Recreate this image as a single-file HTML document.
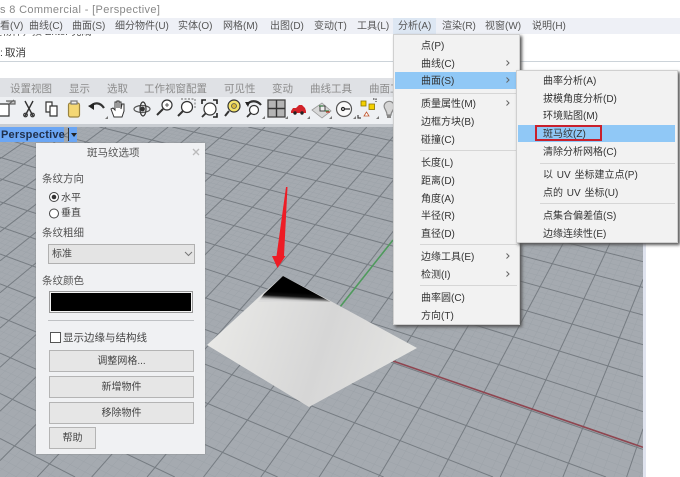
<!DOCTYPE html>
<html><head><meta charset="utf-8"><style>
*{box-sizing:border-box}
html,body{margin:0;padding:0;width:680px;height:477px;overflow:hidden}
body{position:relative;background:#fff;font:10px/14px "Liberation Sans","Noto Sans CJK SC",sans-serif;color:#333}
#root{position:absolute;left:0;top:0;width:680px;height:477px;overflow:hidden;filter:blur(.3px)}
.a,.t{position:absolute;white-space:nowrap}
.t{line-height:14px;height:14px;margin-top:2px}
.d{margin-top:1px}
.b{position:absolute}
.g{color:#8c8c8c;font-size:10.5px;margin-top:1px}
.btn{position:absolute;left:49px;width:145px;height:22px;background:#e6e6e6;border:1px solid #b4b4b4;text-align:center;line-height:22px;color:#444}
</style></head><body><div id="root">
<svg class="a" style="left:0;top:127px" width="643" height="350" viewBox="0 127 643 350" id="vp">
<rect x="0" y="127" width="643" height="350" fill="#a5aab0"/>
<g id="grid"></g>
<line x1="393" y1="361" x2="643" y2="447.300" stroke="#8f4650" stroke-width="1.600"/>
<line x1="340" y1="307" x2="393" y2="240" stroke="#4f9a5c" stroke-width="1.600"/>
<defs><linearGradient id="pl" gradientUnits="userSpaceOnUse" x1="293" y1="292.500" x2="292.500" y2="302"><stop offset="0" stop-color="#000"/><stop offset=".4" stop-color="#111"/><stop offset=".8" stop-color="#c8c8c8"/><stop offset="1" stop-color="#dcdcdc"/></linearGradient>
<linearGradient id="pl2" gradientUnits="userSpaceOnUse" x1="215" y1="330" x2="400" y2="390"><stop offset="0" stop-color="#e8e8e6"/><stop offset=".55" stop-color="#d6d6d6"/><stop offset="1" stop-color="#e4e4e2"/></linearGradient></defs>
<polygon points="283,276 325,298 417,348 309,407 207,345 260,296" fill="url(#pl2)"/>
<polygon points="283,276 331,302 258,302 264,294" fill="url(#pl)"/>
<polygon points="286,187 287.500,187 284,256 285.500,256 277.500,268 272,256 276.500,256" fill="#ee1c25"/>
</svg>
<script>
(function(){var O=[483,394],A=[-1261,-210],B=[960,-503],a=.027,b=.034;
var X0=0,X1=643,Y0=127,Y1=477;
function P(i,j){var d=1+i*a+j*b;return [(O[0]+i*a*A[0]+j*b*B[0])/d,(O[1]+i*a*A[1]+j*b*B[1])/d]}
var s='',I0=-11,I1=30,J0=-9,J1=30;
function L(p,q,c,w){var t0=0,t1=1,dx=q[0]-p[0],dy=q[1]-p[1];
var ps=[-dx,dx,-dy,dy],qs=[p[0]-X0,X1-p[0],p[1]-Y0,Y1-p[1]];
for(var n=0;n<4;n++){if(ps[n]==0){if(qs[n]<0)return}else{var r=qs[n]/ps[n];if(ps[n]<0){if(r>t1)return;if(r>t0)t0=r}else{if(r<t0)return;if(r<t1)t1=r}}}
s+='<line x1="'+(p[0]+t0*dx).toFixed(1)+'" y1="'+(p[1]+t0*dy).toFixed(1)+'" x2="'+(p[0]+t1*dx).toFixed(1)+'" y2="'+(p[1]+t1*dy).toFixed(1)+'" stroke="'+c+'" stroke-width="'+w+'"/>'}
for(var k=0;k<2;k++){for(var n=I0*5;n<=I1*5;n++){var v=n/5,m=n%5==0;if(m!=(k==1))continue;
L(P(v,J0),P(v,J1),m?'#767c82':'#9ca2a8',m?1:.5)}
for(n=J0*5;n<=J1*5;n++){v=n/5;m=n%5==0;if(m!=(k==1))continue;
L(P(I0,v),P(I1,v),m?'#767c82':'#9ca2a8',m?1:.5)}}
document.getElementById('grid').innerHTML=s})();
</script>
<div class="b" style="left:643px;top:127px;width:3px;height:350px;background:#dfe3ee"></div>

<div class="b" style="left:0;top:0;width:680px;height:18px;background:#fff"></div>
<span class="t d" style="left:0;top:2px;color:#888;font-size:11px;letter-spacing:.35px">s 8 Commercial - [Perspective]</span>

<div class="b" style="left:0;top:34px;width:680px;height:44px;background:#fff;overflow:hidden">
<span class="t" style="left:-8px;top:-10px;color:#444">选物件，按 Enter 完成</span>
<span class="t d" style="left:0;top:11px;color:#333;font-size:10.5px">:</span>
<span class="t d" style="left:5px;top:11px;color:#333;font-size:10.5px">取消</span>
<div class="b" style="left:0;top:27px;width:680px;height:1px;background:#ccd3d9"></div>
</div>
<div class="b" style="left:0;top:18px;width:680px;height:16px;background:#eef0f6"></div>
<div class="b" style="left:393px;top:18px;width:43px;height:16px;background:#dde7f3"></div>
<span class="t" style="left:0;top:17.500px;color:#555">看(V)</span>
<span class="t" style="left:29px;top:17.500px;color:#555">曲线(C)</span>
<span class="t" style="left:72px;top:17.500px;color:#555">曲面(S)</span>
<span class="t" style="left:115px;top:17.500px;color:#555">细分物件(U)</span>
<span class="t" style="left:178px;top:17.500px;color:#555">实体(O)</span>
<span class="t" style="left:223px;top:17.500px;color:#555">网格(M)</span>
<span class="t" style="left:270px;top:17.500px;color:#555">出图(D)</span>
<span class="t" style="left:314px;top:17.500px;color:#555">变动(T)</span>
<span class="t" style="left:357px;top:17.500px;color:#555">工具(L)</span>
<span class="t" style="left:398px;top:17.500px;color:#555">分析(A)</span>
<span class="t" style="left:442px;top:17.500px;color:#555">渲染(R)</span>
<span class="t" style="left:485px;top:17.500px;color:#555">视窗(W)</span>
<span class="t" style="left:532px;top:17.500px;color:#555">说明(H)</span>

<div class="b" style="left:0;top:78px;width:643px;height:19px;background:#dfe1e5"></div>
<div class="b" style="left:643px;top:78px;width:37px;height:49px;background:#fff"></div>
<span class="t g" style="left:10px;top:81px">设置视图</span>
<span class="t g" style="left:69px;top:81px">显示</span>
<span class="t g" style="left:107px;top:81px">选取</span>
<span class="t g" style="left:144px;top:81px">工作视窗配置</span>
<span class="t g" style="left:224px;top:81px">可见性</span>
<span class="t g" style="left:272px;top:81px">变动</span>
<span class="t g" style="left:310px;top:81px">曲线工具</span>
<span class="t g" style="left:369px;top:81px">曲面工具</span>
<div class="b" style="left:0;top:97px;width:643px;height:27px;background:#eef0f3"></div>
<div class="b" style="left:0;top:124px;width:643px;height:3px;background:#c9cdd2"></div>

<svg class="a" style="left:0;top:97px" width="400" height="27" viewBox="0 97 400 27" fill="none" stroke="#333" stroke-width="1.200">
<path d="M-2 104H9V116H-2" fill="#fff"/><path d="M9 104L14 100M6 101H15V104H9" fill="#ccc" stroke="#666"/>
<path d="M25 101L33 116M33 101L25 116" stroke="#333" stroke-width="1.400"/><circle cx="25.500" cy="115" r="1.800"/><circle cx="32.500" cy="115" r="1.800"/>
<path d="M46 102H52V112H46Z" fill="#fff"/><path d="M50 106H57V116H50Z" fill="#fff"/>
<rect x="68.500" y="103" width="11" height="14" rx="2" fill="#f4d774" stroke="#9a8440"/><rect x="71" y="101" width="6" height="3" fill="#eee" stroke="#777"/>
<path d="M90 107C94 102 100 102 104 108" stroke-width="2.200"/><path d="M88 106L94 103L94 110Z" fill="#222" stroke="none"/>
<path d="M114 117L111 109L113 108L115 110V102H117V108V101H119V108V102H121V109L122 104H124V111L122 117Z" fill="#fff" stroke-width="1"/>
<ellipse cx="142" cy="109" rx="8" ry="3.500" stroke="#555"/><ellipse cx="143" cy="109" rx="3" ry="7" stroke="#333"/><circle cx="142.500" cy="109" r="1.800" fill="#333"/>
<circle cx="167" cy="105" r="5" fill="#fff"/><path d="M163 109L157 115" stroke-width="2"/><path d="M165 105h4M167 103v4" stroke-width=".8"/>
<circle cx="187" cy="107" r="5.500" fill="#fff"/><path d="M183 111L178 116" stroke-width="2"/><path d="M181 99H195V109" stroke="#666" stroke-dasharray="2 1.500" stroke-width=".9"/>
<circle cx="210" cy="109" r="6" fill="#fff"/><path d="M206 113L202 117" stroke-width="1.800"/><path d="M202 104V100H206M213 100H217V104M217 113V117H213" stroke="#222" stroke-width="1.600"/>
<circle cx="234" cy="106" r="6" fill="#f3e26b"/><path d="M229 111L225 116" stroke-width="2"/><circle cx="234" cy="106" r="2.500" fill="#d9b93a" stroke="#555" stroke-width=".8"/>
<circle cx="254" cy="110" r="4.500" fill="#fff"/><path d="M251 113L247 117" stroke-width="1.800"/><path d="M247 105C250 100 257 100 261 105" stroke-width="2.200"/><path d="M245 102l5 0l-2 5z" fill="#222" stroke="none"/>
<rect x="268" y="100" width="17" height="17" fill="#b4b4b4" stroke="#444" stroke-width="1.300"/><path d="M276.500 100V117M268 108.500H285" stroke="#333" stroke-width="1.400"/>
<path d="M291 111L293 108L296 108L299 105H302L305 108L306 111V113H291Z" fill="#d2232a" stroke="none"/><circle cx="295" cy="113" r="1.700" fill="#222" stroke="none"/><circle cx="302" cy="113" r="1.700" fill="#222" stroke="none"/>
<path d="M312 110L322 103L331 111L322 118Z" fill="#d8d8d8" stroke="#999" stroke-width=".8"/><rect x="320" y="106" width="5" height="5" fill="#eee" stroke="#333" stroke-width=".9"/><path d="M319 106h4M325 111h4" stroke="#3a7d44"/><path d="M326 112h4" stroke="#c0392b"/>
<circle cx="344" cy="109" r="7.500" fill="#fafafa" stroke="#555"/><circle cx="343" cy="109" r="1.500" fill="#fff" stroke="#222"/><path d="M344 109h6" stroke="#222"/>
<rect x="361" y="101" width="5" height="5" fill="#f4d000" stroke="#8a7400" stroke-width=".8"/><rect x="369" y="104" width="5.500" height="5.500" fill="#f4d000" stroke="#8a7400" stroke-width=".8"/><path d="M364 116L366.500 112L369 116Z" fill="#fff" stroke="#c0552d" stroke-width=".8"/><path d="M373 99H376V102" stroke="#444" stroke-dasharray="1.500 1"/><path d="M358 115V118H361" stroke="#444"/>
<path d="M385 109C381 102 392 98 394 105C395 110 391 111 391 115H387C387 112 386 111 385 109Z" fill="#d5d5d5" stroke="#888"/><rect x="387" y="115" width="4" height="3" fill="#888" stroke="none"/>
<g fill="#777" stroke="none"><path d="M105 119h3v-3z"/><path d="M262 119h3v-3z"/><path d="M285 119h3v-3z"/><path d="M307 119h3v-3z"/><path d="M329 119h3v-3z"/><path d="M353 119h3v-3z"/><path d="M376 119h3v-3z"/></g>
</svg>

<div class="b" style="left:0;top:127px;width:64px;height:15px;background:#6ba6f4"></div>
<div class="b" style="left:68px;top:127px;width:9px;height:15px;background:#6ba6f4"></div>
<div class="b" style="left:68px;top:128px;width:1px;height:13px;background:#333"></div>
<span class="t d" style="left:1px;top:127px;font-size:11px;font-weight:bold;color:#1f2f4a;letter-spacing:.2px">Perspective</span>
<div class="b" style="left:71px;top:133px;border:3px solid transparent;border-top:4px solid #222"></div>

<div class="b" style="left:36px;top:143px;width:169px;height:311px;background:#f0f1f3;box-shadow:0 0 1px #777"></div>
<span class="t d" style="left:87px;top:145px;font-size:10.5px;color:#555">斑马纹选项</span>
<svg class="a" style="left:192px;top:148px" width="8" height="8"><path d="M1 1L7 7M7 1L1 7" stroke="#bbb" stroke-width="1.300"/></svg>
<span class="t d" style="left:42px;top:171px;color:#555;font-size:10.500px">条纹方向</span>
<svg class="a" style="left:47px;top:190px" width="14" height="30" fill="#fff" stroke="#444"><circle cx="7" cy="7" r="4.500"/><circle cx="7" cy="7" r="2.300" fill="#333" stroke="none"/><circle cx="7" cy="23.500" r="4.500"/></svg>
<span class="t" style="left:61px;top:190px;color:#444">水平</span>
<span class="t d" style="left:61px;top:206px;color:#444">垂直</span>
<span class="t d" style="left:42px;top:225px;color:#555;font-size:10.500px">条纹粗细</span>
<div class="b" style="left:48px;top:244px;width:147px;height:20px;background:#e4e4e4;border:1px solid #b0b0b0"></div>
<span class="t d" style="left:52px;top:247px;color:#444">标准</span>
<svg class="a" style="left:184px;top:251px" width="9" height="6"><path d="M1 1L4.500 4.500L8 1" fill="none" stroke="#777"/></svg>
<span class="t d" style="left:42px;top:273px;color:#555;font-size:10.500px">条纹颜色</span>
<div class="b" style="left:49px;top:291px;width:144px;height:22px;background:#000;border:2px solid #f4f4f4;outline:1px solid #999;outline-offset:-1px"></div>
<div class="b" style="left:48px;top:320px;width:146px;height:1px;background:#bfc1c4"></div>
<div class="b" style="left:50px;top:332px;width:11px;height:11px;background:#fff;border:1px solid #555"></div>
<span class="t" style="left:63px;top:329px;color:#444;font-size:10.500px">显示边缘与结构线</span>
<div class="btn" style="top:350px">调整网格...</div>
<div class="btn" style="top:376px">新增物件</div>
<div class="btn" style="top:402px">移除物件</div>
<div class="btn" style="top:427px;width:47px">帮助</div>

<div class="b" style="left:393px;top:34px;width:127px;height:291px;background:#f2f2f2;border:1px solid #d0d0d0;box-shadow:2px 2px 3px #555"></div>
<div class="b" style="left:395px;top:72px;width:122px;height:17px;background:#90c8f6"></div>
<div class="b" style="left:420px;top:93px;width:97px;height:1px;background:#d6d6d6"></div>
<div class="b" style="left:420px;top:150px;width:97px;height:1px;background:#d6d6d6"></div>
<div class="b" style="left:420px;top:244px;width:97px;height:1px;background:#d6d6d6"></div>
<div class="b" style="left:420px;top:285px;width:97px;height:1px;background:#d6d6d6"></div>
<span class="t" style="left:421px;top:38px">点(P)</span>
<span class="t" style="left:421px;top:56px">曲线(C)</span>
<span class="t" style="left:421px;top:73px">曲面(S)</span>
<span class="t" style="left:421px;top:96px">质量属性(M)</span>
<span class="t" style="left:421px;top:114px">边框方块(B)</span>
<span class="t" style="left:421px;top:132px">碰撞(C)</span>
<span class="t" style="left:421px;top:155px">长度(L)</span>
<span class="t" style="left:421px;top:173px">距离(D)</span>
<span class="t" style="left:421px;top:191px">角度(A)</span>
<span class="t" style="left:421px;top:208px">半径(R)</span>
<span class="t" style="left:421px;top:226px">直径(D)</span>
<span class="t" style="left:421px;top:249px">边缘工具(E)</span>
<span class="t" style="left:421px;top:267px">检测(I)</span>
<span class="t" style="left:421px;top:290px">曲率圆(C)</span>
<span class="t" style="left:421px;top:308px">方向(T)</span>
<svg class="a" style="left:505px;top:0" width="6" height="290" fill="none" stroke="#666"><path d="M1.500 60.500L4 63L1.500 65.500M1.500 77.500L4 80L1.500 82.500M1.500 100.500L4 103L1.500 105.500M1.500 253.500L4 256L1.500 258.500M1.500 271.500L4 274L1.500 276.500"/></svg>

<div class="b" style="left:516px;top:70px;width:162px;height:173px;background:#f2f2f2;border:1px solid #d0d0d0;box-shadow:2px 2px 3px #555"></div>
<div class="b" style="left:518px;top:125px;width:157px;height:17px;background:#90c8f6"></div>
<div class="b" style="left:535px;top:125px;width:67px;height:16px;border:2px solid #c8202c"></div>
<div class="b" style="left:540px;top:163px;width:135px;height:1px;background:#d6d6d6"></div>
<div class="b" style="left:540px;top:203px;width:135px;height:1px;background:#d6d6d6"></div>
<span class="t" style="left:543px;top:73px">曲率分析(A)</span>
<span class="t" style="left:543px;top:91px">拔模角度分析(D)</span>
<span class="t" style="left:543px;top:108px">环境贴图(M)</span>
<span class="t" style="left:543px;top:126px">斑马纹(Z)</span>
<span class="t" style="left:543px;top:144px">清除分析网格(C)</span>
<span class="t" style="left:543px;top:167px;word-spacing:1px">以 UV 坐标建立点(P)</span>
<span class="t" style="left:543px;top:185px;word-spacing:1px">点的 UV 坐标(U)</span>
<span class="t" style="left:543px;top:208px">点集合偏差值(S)</span>
<span class="t" style="left:543px;top:226px">边缘连续性(E)</span>
</div></body></html>
